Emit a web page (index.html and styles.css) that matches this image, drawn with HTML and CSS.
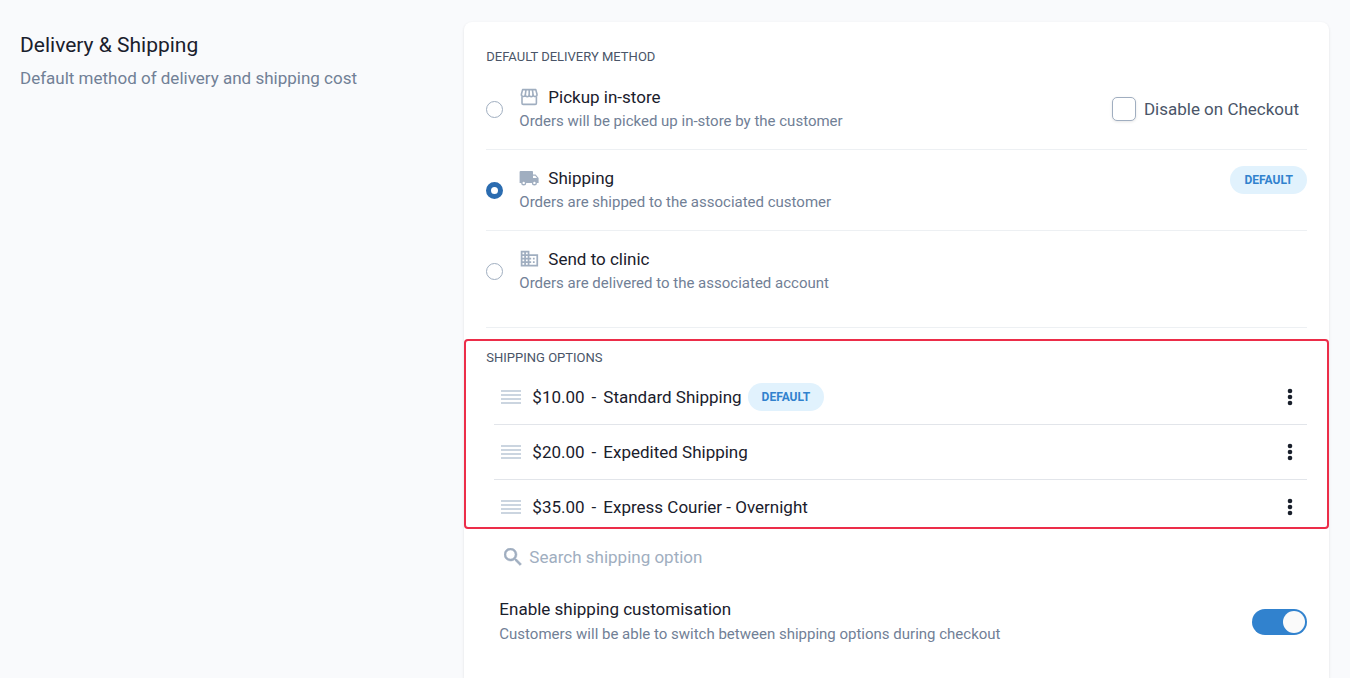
FILE: index.html
```html
<!DOCTYPE html>
<html lang="en">
<head>
  <meta charset="utf-8">
  <meta name="viewport" content="width=device-width, initial-scale=1">
  <title>Delivery &amp; Shipping</title>
  <link rel="stylesheet" href="styles.css">
</head>
<body>
  <main class="settings">
    <header class="intro">
      <h1 class="intro-title">Delivery &amp; Shipping</h1>
      <p class="intro-text">Default method of delivery and shipping cost</p>
    </header>

    <form class="card">
      <section class="methods">
        <h2 class="section-title">DEFAULT DELIVERY METHOD</h2>

        <div class="method">
          <input class="radio" type="radio" name="method" id="pickup">
          <label class="method-label" for="pickup">
            <span class="method-name">
              <svg class="icon" viewBox="0 0 20 20" fill="none" stroke="currentColor" stroke-width="1.6" stroke-linejoin="round">
                <path d="M3.600 2.600h13.200l1.200 4.600a1.900 1.900 0 0 1-3.900.6 1.950 1.950 0 0 1-3.900 0 1.950 1.950 0 0 1-3.900 0 1.900 1.900 0 0 1-3.900-.6z"/>
                <path d="M7 2.600l-.7 5.200M10.200 2.600v5.200M13.400 2.600l.7 5.200M3 9.500v6.700q0 1.200 1.200 1.200h12q1.200 0 1.200-1.200V9.500"/>
              </svg>
              Pickup in-store
            </span>
            <span class="hint">Orders will be picked up in-store by the customer</span>
          </label>
          <label class="disable">
            <input class="checkbox" type="checkbox" name="disable">
            Disable on Checkout
          </label>
        </div>

        <div class="method">
          <input class="radio" type="radio" name="method" id="shipping" checked>
          <label class="method-label" for="shipping">
            <span class="method-name">
              <svg class="icon" viewBox="0 0 20 20" fill="currentColor">
                <path fill-rule="evenodd" d="M1.600 3h11.600q.8 0 .8.8V6.400h2.600L19.600 10v5h-1.700a2.500 2.500 0 0 1-5 0H7.200a2.500 2.500 0 0 1-5 0H.600V4q0-1 1-1zM14 7.700V10h4l-1.800-2.300zM4.700 13.700a1.200 1.200 0 1 0 0 2.400 1.200 1.200 0 0 0 0-2.400zM15.400 13.700a1.200 1.200 0 1 0 0 2.400 1.200 1.200 0 0 0 0-2.400z"/>
              </svg>
              Shipping
            </span>
            <span class="hint">Orders are shipped to the associated customer</span>
          </label>
          <span class="badge badge-top">DEFAULT</span>
        </div>

        <div class="method">
          <input class="radio" type="radio" name="method" id="clinic">
          <label class="method-label" for="clinic">
            <span class="method-name">
              <svg class="icon" viewBox="0 1 23 23" fill="currentColor">
                <path d="M12 7V3H2v18h20V7H12zM6 19H4v-2h2v2zm0-4H4v-2h2v2zm0-4H4V9h2v2zm0-4H4V5h2v2zm4 12H8v-2h2v2zm0-4H8v-2h2v2zm0-4H8V9h2v2zm0-4H8V5h2v2zm10 12h-8v-2h2v-2h-2v-2h2v-2h-2V9h8v10zm-2-8h-2v2h2v-2zm0 4h-2v2h2v-2z"/>
              </svg>
              Send to clinic
            </span>
            <span class="hint">Orders are delivered to the associated account</span>
          </label>
        </div>
      </section>

      <section class="options">
        <h2 class="section-title">SHIPPING OPTIONS</h2>
        <ul class="option-list">
          <li class="option">
            <svg class="handle" viewBox="0 0 20 16"><path d="M0 2h20M0 6h20M0 10h20M0 14h20"/></svg>
            <span class="price">$10.00</span><span class="dash">-</span><span>Standard Shipping</span>
            <span class="badge badge-inline">DEFAULT</span>
            <button class="menu" type="button" aria-label="Standard Shipping menu">
              <svg class="dots" viewBox="0 0 6 18"><circle cx="3" cy="3" r="2.300"/><circle cx="3" cy="9" r="2.300"/><circle cx="3" cy="15" r="2.300"/></svg>
            </button>
          </li>
          <li class="option">
            <svg class="handle" viewBox="0 0 20 16"><path d="M0 2h20M0 6h20M0 10h20M0 14h20"/></svg>
            <span class="price">$20.00</span><span class="dash">-</span><span>Expedited Shipping</span>
            <button class="menu" type="button" aria-label="Expedited Shipping menu">
              <svg class="dots" viewBox="0 0 6 18"><circle cx="3" cy="3" r="2.300"/><circle cx="3" cy="9" r="2.300"/><circle cx="3" cy="15" r="2.300"/></svg>
            </button>
          </li>
          <li class="option">
            <svg class="handle" viewBox="0 0 20 16"><path d="M0 2h20M0 6h20M0 10h20M0 14h20"/></svg>
            <span class="price">$35.00</span><span class="dash">-</span><span>Express Courier - Overnight</span>
            <button class="menu" type="button" aria-label="Express Courier menu">
              <svg class="dots" viewBox="0 0 6 18"><circle cx="3" cy="3" r="2.300"/><circle cx="3" cy="9" r="2.300"/><circle cx="3" cy="15" r="2.300"/></svg>
            </button>
          </li>
        </ul>
      </section>

      <label class="search">
        <svg class="search-icon" viewBox="3 3 18 18" fill="currentColor" stroke="currentColor" stroke-width=".5">
          <path d="M15.500 14h-.79l-.28-.27A6.471 6.471 0 0 0 16 9.500 6.500 6.500 0 1 0 9.500 16c1.610 0 3.090-.59 4.230-1.570l.27.28v.79l5 4.990L20.490 19l-4.990-5zm-6 0C7.010 14 5 11.990 5 9.500S7.010 5 9.500 5 14 7.010 14 9.500 11.990 14 9.500 14z"/>
        </svg>
        <input class="search-input" type="text" placeholder="Search shipping option" aria-label="Search shipping option">
      </label>

      <div class="customise">
        <label class="customise-label" for="customise">
          <span class="customise-name">Enable shipping customisation</span>
          <span class="hint">Customers will be able to switch between shipping options during checkout</span>
        </label>
        <input class="toggle" type="checkbox" id="customise" checked>
      </div>
    </form>
  </main>
</body>
</html>
```
FILE: styles.css
```css
* {
    box-sizing: border-box;
}
body {
    margin: 0;
    background-color: #f9fafc;
    color: #1a202c;
    font-family: Roboto, "Liberation Sans", sans-serif;
    font-size: 17px;
    line-height: 24px;
}
h1, h2, p, ul {
    margin: 0;
    padding: 0;
    font-weight: 400;
}
input, button {
    margin: 0;
    font-family: inherit;
}
.settings {
    display: grid;
    grid-template-columns: 1fr 2fr;
    gap: 12px;
    min-height: 100vh;
    padding: 22px 21px 0 20px;
}

/* left column */
.intro {
    padding-top: 11px;
}
.intro-title {
    font-size: 21px;
}
.intro-text {
    margin-top: 9px;
    color: #718096;
}

/* card */
.card {
    padding: 23px 22px 0;
    background-color: #fff;
    border-radius: 8px 8px 0 0;
    box-shadow: 0 1px 3px rgba(0, 0, 0, 0.1);
}
.section-title {
    color: #4a5568;
    font-size: 13px;
    line-height: 24px;
}
.hint {
    color: #718096;
    font-size: 15px;
}

/* delivery methods */
.methods {
    border-bottom: 1px solid #edf0f3;
}
.method {
    display: flex;
    align-items: center;
    padding: 16px 0;
    border-bottom: 1px solid #edf0f3;
}
.method:last-child {
    padding-bottom: 32px;
    border-bottom: none;
}
.method-label {
    display: flex;
    flex: 1;
    flex-direction: column;
    margin-left: 16px;
}
.method-name {
    display: flex;
    align-items: center;
    gap: 9px;
}
.icon {
    width: 20px;
    height: 20px;
    color: #a0aec0;
}
.radio {
    appearance: none;
    width: 17px;
    height: 17px;
    background-color: #fff;
    border: 1px solid #a0aec0;
    border-radius: 50%;
}
.radio:checked {
    border: 5px solid #2b6cb0;
}
.disable {
    display: flex;
    align-items: center;
    gap: 8px;
    padding-right: 8px;
    color: #4a5568;
}
.checkbox {
    appearance: none;
    width: 24px;
    height: 24px;
    background-color: #fff;
    border: 1px solid #a0aec0;
    border-radius: 5px;
    box-shadow: 0 1px 3px rgba(0, 0, 0, 0.1);
}
.checkbox:checked {
    background-color: #3182ce;
}
.badge {
    padding: 0 14px;
    background-color: #e1f2fd;
    border-radius: 14px;
    color: #3182ce;
    font-size: 12px;
    font-weight: 700;
    line-height: 28px;
}
.badge-top {
    align-self: flex-start;
}
.badge-inline {
    margin-left: 6px;
}

/* shipping options */
.options {
    margin: 11px -22px 0;
    padding: 5px 20px 0;
    border: 2px solid #ec2d49;
    border-radius: 4px;
}
.option-list {
    padding-left: 8px;
    list-style: none;
}
.option {
    display: flex;
    align-items: center;
    min-height: 55px;
    padding: 13px 13px 13px 7px;
    border-bottom: 1px solid #e2e5ea;
}
.option:last-child {
    min-height: 0;
    padding-bottom: 6px;
    border-bottom: none;
}
.handle {
    width: 20px;
    height: 16px;
    margin-right: 11px;
    stroke: #cbd5e0;
    stroke-width: 2;
}
.dash {
    margin: 0 7px;
}
.menu {
    display: flex;
    align-items: center;
    justify-content: center;
    height: 28px;
    margin-left: auto;
    padding: 0 1px;
    background: none;
    border: none;
    cursor: pointer;
}
.dots {
    width: 6px;
    height: 18px;
    fill: #1a202c;
}

/* search */
.search {
    display: flex;
    align-items: center;
    gap: 7px;
    padding: 16px 0 0 18px;
    color: #a0aec0;
}
.search-icon {
    width: 18px;
    height: 18px;
}
.search-input {
    flex: 1;
    height: 24px;
    padding: 0;
    background: none;
    border: none;
    color: #1a202c;
    font-size: 17px;
}
.search-input::placeholder {
    color: #a0aec0;
}

/* customisation toggle */
.customise {
    display: flex;
    align-items: center;
    justify-content: space-between;
    margin-top: 28px;
    padding-left: 13px;
}
.customise-label {
    display: flex;
    flex-direction: column;
    gap: 1px;
}
.toggle {
    display: flex;
    align-items: center;
    appearance: none;
    width: 55px;
    height: 26px;
    padding: 2px;
    background-color: #cbd5e0;
    border-radius: 13px;
    cursor: pointer;
}
.toggle::before {
    content: "";
    width: 22px;
    height: 22px;
    background-color: #fafafa;
    border-radius: 50%;
}
.toggle:checked {
    justify-content: flex-end;
    background-color: #3182ce;
}
```
